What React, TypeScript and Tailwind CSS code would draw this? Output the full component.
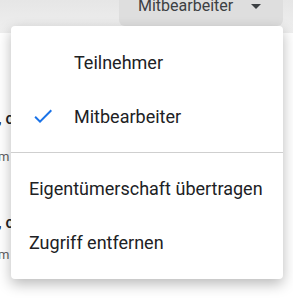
import { useState } from 'react';

interface MenuItem {
  label: string;
  checkable: boolean;
}

const roleItems: MenuItem[] = [
  { label: 'Teilnehmer', checkable: true },
  { label: 'Mitbearbeiter', checkable: true },
];

const actionItems: MenuItem[] = [
  { label: 'Eigentümerschaft übertragen', checkable: false },
  { label: 'Zugriff entfernen', checkable: false },
];

function CheckIcon() {
  return (
    <svg className="w-6 h-6 text-[#1a73e8]" viewBox="0 0 24 24" fill="currentColor">
      <path d="M9 16.17L4.83 12l-1.42 1.41L9 19 21 7l-1.41-1.41z" />
    </svg>
  );
}

export default function App() {
  const [role, setRole] = useState('Mitbearbeiter');

  return (
    <div className="relative w-[293px] h-[300px] overflow-hidden bg-white font-['Roboto',sans-serif] text-[#202124]">
      {/* Kopfzeile */}
      <div className="h-[33px] bg-gradient-to-b from-[#e6e6e6] to-[#efefef] flex justify-end pr-[10px]">
        <div className="w-[164px] h-[26px] bg-[#dedede] rounded-b-md flex items-start pl-[19px] overflow-hidden">
          <span className="-mt-[4px] leading-5 text-base text-[#3c4043]">{role}</span>
          <svg className="w-[10px] h-[5px] ml-[18px] mt-[4px] text-[#3c4043]" viewBox="0 0 10 5" fill="currentColor">
            <path d="M0 0l5 5 5-5z" />
          </svg>
        </div>
      </div>

      {/* Liste dahinter */}
      <div className="flex flex-col -ml-[2px]">
        <span className="mt-[76px] text-base leading-5 font-medium">, c</span>
        <span className="mt-[20px] text-[13px] leading-4 text-[#616161]">m</span>
        <span className="mt-[48px] text-base leading-5 font-medium">, c</span>
        <span className="mt-[14px] text-[13px] leading-4 text-[#616161]">m</span>
      </div>

      {/* Menü */}
      <div className="absolute left-[11px] top-[26px] w-[272px] bg-white rounded-[4px] pt-[9px] pb-[10px] shadow-[0_5px_14px_rgba(0,0,0,0.28)]">
        {roleItems.map((item) => (
          <div
            key={item.label}
            className="h-[54px] flex items-center pl-[20px] text-[18px] cursor-pointer"
            onClick={() => setRole(item.label)}
          >
            <div className="w-6 h-6 mr-[19px]">{role === item.label && <CheckIcon />}</div>
            <span>{item.label}</span>
          </div>
        ))}
        <div className="mt-[9px] mb-2 h-px bg-[#cfcfcf]" />
        {actionItems.map((item) => (
          <div key={item.label} className="h-[54px] flex items-center pl-[18px] text-[18px] cursor-pointer">
            <span>{item.label}</span>
          </div>
        ))}
      </div>
    </div>
  );
}
